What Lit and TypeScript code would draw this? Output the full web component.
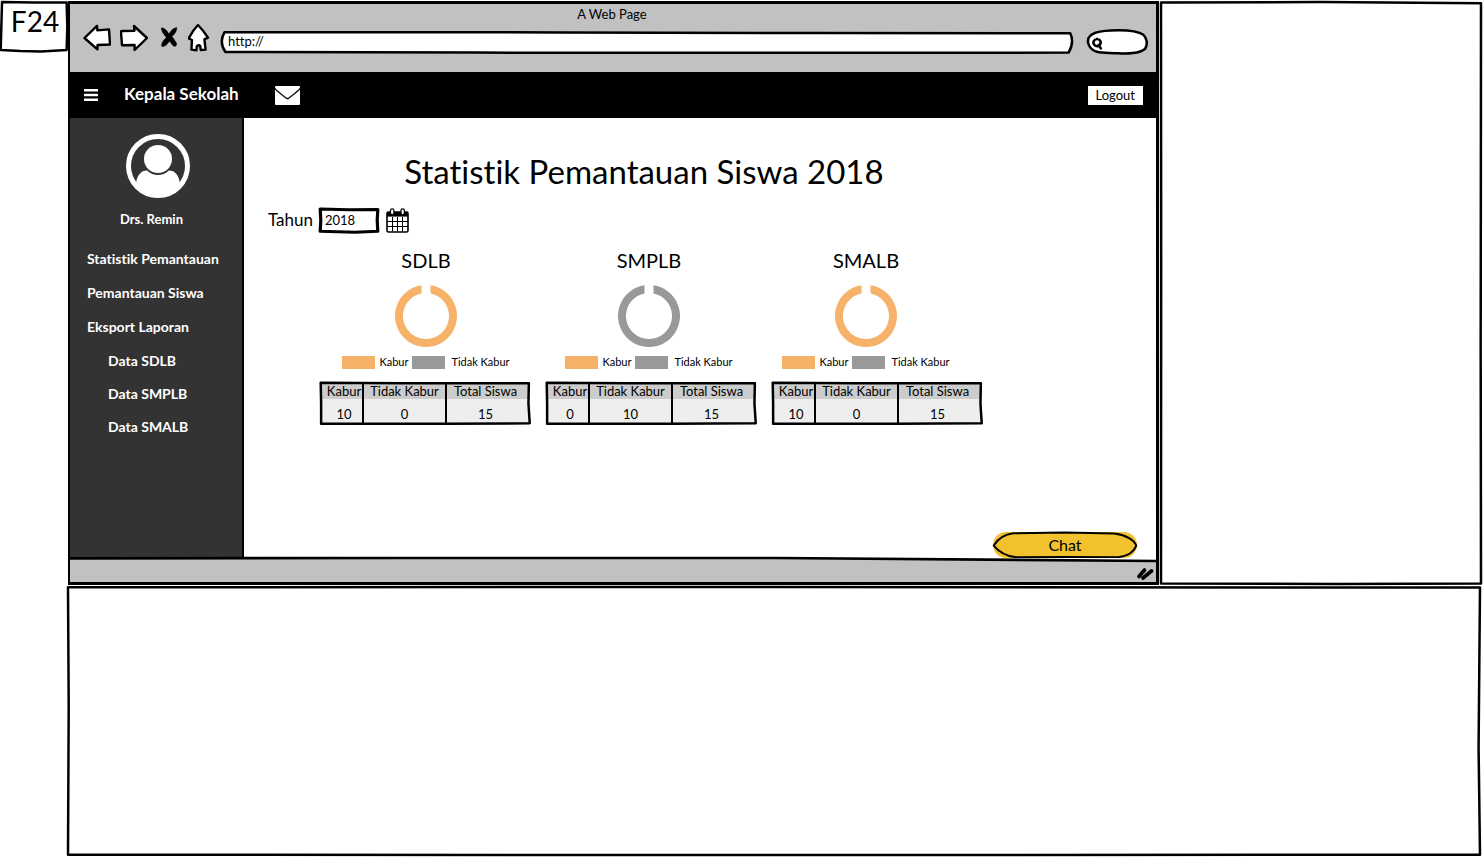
import { LitElement, html, css } from "lit";
import { customElement, property, state } from "lit/decorators.js";

interface School {
  name: string;
  ran: number;
  stayed: number;
  total: number;
}

const SCHOOLS: School[] = [
  { name: "SDLB", ran: 10, stayed: 0, total: 15 },
  { name: "SMPLB", ran: 0, stayed: 10, total: 15 },
  { name: "SMALB", ran: 10, stayed: 0, total: 15 },
];

const ORANGE = "#f7b26a";
const GREY = "#999999";

/* Hand-drawn outlines in a 100x100 box that stretches over its parent. */
const OUTLINES = {
  panel: "M0 0.1 L50 0 L100 0.2 L99.9 60 L100 99.9 L55 100 L0 99.9 L0.05 45 Z",
  tag: "M3 4 L50 5 L98 5 L99 50 L98 96 L60 99 L30 98 L1 96 L2 50 Z",
  address: "M0.3 5 L40 6 L70 9 L99.8 10 Q100.3 50 99.6 94 L60 95 L30 94 L0.4 91 Q-0.4 50 0.3 5 Z",
  search: "M3 62 C-4 20 14 4 40 2 C60 0 84 2 94 20 C101 36 101 60 97 78 C88 98 66 100 52 97 C32 92 10 104 3 62 Z",
  field: "M2 4 L50 7 L98 6 L97 50 L98 93 L60 97 L2 93 L3 50 Z",
  table: "M0.8 4 L40 5 L99 5 L98.8 50 L99.4 94 L60 95 L1 95 L1 50 Z",
  pill: "M0.5 52 C4 22 8 9 14 5 L50 2 L84 6 C92 10 98 30 99.5 52 C98 76 94 92 87 97 L50 96 L16 97 C8 92 4 76 0.5 52 Z",
};

const sketch = (shape: keyof typeof OUTLINES, kind = "") => html`
  <svg class="sketch ${kind}" viewBox="0 0 100 100" preserveAspectRatio="none" aria-hidden="true">
    <path d=${OUTLINES[shape]} vector-effect="non-scaling-stroke"></path>
  </svg>
`;

const base = css`
  * {
    box-sizing: border-box;
  }
  button,
  input {
    font: inherit;
    color: inherit;
    margin: 0;
    padding: 0;
    border: 0;
    background: none;
  }
  button {
    cursor: pointer;
  }
  .sketch {
    position: absolute;
    inset: 0;
    width: 100%;
    height: 100%;
    overflow: visible;
    fill: none;
    stroke: #000;
    stroke-width: 2.5;
    stroke-linejoin: round;
    pointer-events: none;
  }
  .sketch.white {
    fill: #fff;
  }
  .sketch.heavy {
    stroke-width: 3.2;
  }
  .sketch.light {
    stroke-width: 2;
  }
`;

@customElement("school-chart")
class SchoolChart extends LitElement {
  @property({ attribute: false }) school!: School;

  static styles = [
    base,
    css`
      :host {
        display: flex;
        flex-direction: column;
        align-items: center;
        width: 170px;
      }
      h2 {
        margin: 0 0 13px;
        font-size: 20px;
        line-height: 24px;
        font-weight: 400;
      }
      .ring {
        display: block;
        width: 62px;
        height: 62px;
      }
      .legend {
        display: flex;
        align-items: center;
        gap: 4px;
        margin-top: 8px;
        font-size: 11px;
        line-height: 14px;
        white-space: nowrap;
      }
      .swatch {
        width: 33px;
        height: 13px;
        background: #f7b26a;
      }
      .swatch.stayed {
        background: #999;
        margin-right: 2px;
      }
    `,
  ];

  render() {
    const { name, ran, stayed } = this.school;
    return html`
      <h2>${name}</h2>
      <svg class="ring" viewBox="0 0 62 62" role="img" aria-label=${name}>
        <path
          fill=${ran >= stayed ? ORANGE : GREY}
          d="M26.5 0.3 A31 31 0 1 0 35.5 0.3 V8.4 A23 23 0 1 1 26.5 8.4 Z"
        ></path>
      </svg>
      <div class="legend">
        <span class="swatch"></span><span>Kabur</span>
        <span class="swatch stayed"></span><span>Tidak Kabur</span>
      </div>
    `;
  }
}

@customElement("school-table")
class SchoolTable extends LitElement {
  @property({ attribute: false }) school!: School;

  static styles = [
    base,
    css`
      :host {
        display: block;
        position: relative;
        width: 212px;
        padding: 3px;
      }
      table {
        width: 100%;
        border-collapse: collapse;
        table-layout: fixed;
        font-size: 13px;
        text-align: center;
        white-space: nowrap;
        background: #eee;
      }
      .first {
        width: 41px;
      }
      .middle {
        width: 83px;
      }
      th,
      td {
        padding: 0;
        border-left: 2px solid #000;
      }
      th {
        height: 15px;
        line-height: 15px;
        font-weight: 400;
        background: #ccc;
      }
      td {
        height: 24px;
        line-height: 18px;
        padding-top: 6px;
      }
      th:first-child,
      td:first-child {
        padding-left: 4px;
        border-left: 0;
      }
      th:last-child,
      td:last-child {
        padding-right: 4px;
      }
    `,
  ];

  render() {
    const { name, ran, stayed, total } = this.school;
    return html`
      <table aria-label=${name}>
        <colgroup>
          <col class="first" />
          <col class="middle" />
          <col />
        </colgroup>
        <thead>
          <tr>
            <th scope="col">Kabur</th>
            <th scope="col">Tidak Kabur</th>
            <th scope="col">Total Siswa</th>
          </tr>
        </thead>
        <tbody>
          <tr>
            <td>${ran}</td>
            <td>${stayed}</td>
            <td>${total}</td>
          </tr>
        </tbody>
      </table>
      ${sketch("table")}
    `;
  }
}

@customElement("browser-chrome")
class BrowserChrome extends LitElement {
  static styles = [
    base,
    css`
      :host {
        display: block;
        padding: 2px 9px 18px 13px;
        background: #c1c1c1;
      }
      .title {
        font-size: 13px;
        line-height: 16px;
        padding-right: 6px;
        text-align: center;
      }
      .bar {
        display: flex;
        align-items: flex-end;
        height: 32px;
        padding-top: 2px;
      }
      .nav {
        display: flex;
        align-self: flex-start;
        gap: 9px;
        margin-right: 12px;
      }
      .nav button,
      .nav svg {
        display: block;
        height: 28px;
      }
      .nav svg {
        fill: #fff;
        stroke: #000;
        stroke-width: 2.4;
        stroke-linejoin: round;
      }
      .address {
        position: relative;
        flex: 1;
        height: 23px;
        margin-right: 15px;
      }
      .address input {
        position: relative;
        display: block;
        width: 100%;
        height: 19px;
        padding-left: 6px;
        font-size: 13px;
      }
      .search {
        position: relative;
        display: flex;
        width: 60px;
        height: 24px;
      }
      .search svg.glass {
        position: relative;
        flex: none;
        width: 12px;
        height: 14px;
        margin: 6px 0 0 4px;
        fill: none;
        stroke: #000;
        stroke-width: 2.6;
        stroke-linecap: round;
      }
      .search input {
        position: relative;
        width: 36px;
        font-size: 13px;
      }
    `,
  ];

  render() {
    return html`
      <div class="title">A Web Page</div>
      <div class="bar">
        <div class="nav">
          <button aria-label="Back">
            <svg width="28" viewBox="0 0 28 28">
              <path d="M1.5 14 L14 1.8 L14.4 6.4 L26 5.4 L27 20.5 L14.6 21 L14.4 25.4 Z" />
            </svg>
          </button>
          <button aria-label="Forward">
            <svg width="28" viewBox="0 0 28 28">
              <path d="M1 8 Q0.6 7 2 7 L14.4 6.8 L14 2 L27 14 L14.6 26 L14.6 21 L2 21.2 Z" />
            </svg>
          </button>
          <button aria-label="Stop">
            <svg width="22" viewBox="0 0 22 28">
              <path
                d="M6 4 Q9 5 12 10 Q15 4 19.6 3.4 Q20.5 7 15 12.5 L19.4 19 Q20 23 16.4 22 L12.4 17 Q9 23 5 22.4 Q3.4 19 9.4 13.5 Q4 7 4.4 4 Z"
                fill="#000"
                stroke-width="0.6"
              />
            </svg>
          </button>
          <button aria-label="Home">
            <svg width="22" viewBox="0 0 22 28">
              <path
                d="M10 1 Q15 6 20 13.6 L16.4 15.4 L17.6 25.6 L12.8 26 L12.2 22 Q10.4 20.4 8.8 22.2 L8.4 26.4 L3.4 25.6 L4 16 L0.6 14.4 Q5 6 10 1 Z"
              />
            </svg>
          </button>
        </div>
        <div class="address">
          ${sketch("address", "white")}
          <input type="text" value="http://" aria-label="Address" />
        </div>
        <div class="search">
          ${sketch("search", "white")}
          <svg class="glass" viewBox="0 0 12 14" aria-hidden="true">
            <path d="M6 3 A3.6 3.6 0 1 0 6.1 3 M7.6 9 L9.8 12.4" />
          </svg>
          <input type="text" aria-label="Search" />
        </div>
      </div>
    `;
  }
}

@customElement("app-root")
class AppRoot extends LitElement {
  @state() private year = "2018";

  static styles = [
    base,
    css`
      :host {
        display: grid;
        grid-template-columns: 68px minmax(0, 1fr) 322px;
        grid-template-rows: 1fr 271px;
        min-height: 100vh;
        padding-right: 1px;
        box-sizing: border-box;
        background: #fff;
        color: #000;
        font-family: Lato, "Open Sans", sans-serif;
        font-size: 14px;
        font-variant-ligatures: none;
        overflow: hidden;
      }
      .tag {
        position: relative;
        height: 52px;
        padding-left: 2px;
        font-size: 28px;
        line-height: 42px;
        text-align: center;
      }
      .window {
        display: flex;
        flex-direction: column;
        margin: 1px 1px 1px 0;
        border: 3px solid #000;
        border-left-width: 2px;
      }
      .notes {
        position: relative;
        margin: 2px 1px;
      }
      .footnotes {
        position: relative;
        grid-column: 2 / 4;
        margin: 1px 2px 2px 0;
      }
      .topbar {
        display: flex;
        align-items: center;
        height: 46px;
        padding: 0 13px 0 14px;
        background: #000;
        color: #fff;
      }
      .topbar button,
      .topbar svg {
        display: block;
      }
      .role {
        margin: 0 36px 0 26px;
        font-size: 17px;
        line-height: 20px;
        padding-bottom: 2px;
        font-weight: 700;
      }
      .topbar .logout {
        height: 19px;
        margin-left: auto;
        padding: 0 8px;
        background: #fff;
        color: #000;
        font-size: 13px;
        line-height: 19px;
      }
      .body {
        display: flex;
        flex: 1;
      }
      .sidebar {
        width: 174px;
        padding-top: 16px;
        border-right: 2px solid #000;
        background: #333;
        color: #fff;
        font-weight: 700;
      }
      .avatar {
        display: block;
        width: 64px;
        margin-left: 56px;
      }
      .user {
        margin: 11px 20px 13px 0;
        padding-left: 11px;
        font-size: 13px;
        line-height: 20px;
        text-align: center;
      }
      .menu {
        margin: 0;
        padding: 0 0 0 17px;
        list-style: none;
      }
      .menu a {
        display: block;
        line-height: 34px;
        color: inherit;
        text-decoration: none;
        white-space: nowrap;
      }
      .menu .sub a {
        padding-left: 21px;
        line-height: 33px;
      }
      .content {
        display: flex;
        flex: 1;
        flex-direction: column;
        padding: 34px 19px 0 24px;
      }
      h1 {
        max-width: 752px;
        margin: 0 0 16px;
        font-size: 33px;
        line-height: 38px;
        padding-bottom: 2px;
        font-weight: 400;
        text-align: center;
      }
      .year {
        display: flex;
        align-items: center;
        height: 25px;
        margin-bottom: 15px;
      }
      .year label {
        width: 51px;
        font-size: 17px;
        line-height: 20px;
        padding-bottom: 2px;
      }
      .year .field {
        position: relative;
        width: 60px;
        height: 25px;
        margin-right: 7px;
      }
      .year input {
        position: relative;
        display: block;
        width: 60px;
        height: 23px;
        padding-left: 6px;
        font-size: 13px;
      }
      .year svg {
        display: block;
      }
      .charts {
        display: grid;
        grid-template-columns: 223px 217px 170px;
        margin: 0 0 12px 73px;
      }
      .tables {
        display: flex;
        gap: 14px;
        margin-left: 51px;
      }
      .chat {
        position: relative;
        width: 144px;
        height: 26px;
        margin-top: auto;
        padding-bottom: 2px;
        align-self: flex-end;
        border-radius: 13px;
        background: #f2c12e;
        font-size: 16px;
      }
      .status {
        position: relative;
        height: 24px;
        background: #c1c1c1;
      }
      .status .edge {
        position: absolute;
        inset: 0;
        width: 100%;
        height: 100%;
        overflow: visible;
      }
      .status .grip {
        position: absolute;
        right: 2px;
        bottom: 1px;
      }
    `,
  ];

  render() {
    return html`
      <div class="tag">${sketch("tag")}F24</div>
      <section class="window">
        <browser-chrome></browser-chrome>
        <header class="topbar">
          <button aria-label="Menu">
            <svg width="14" height="12" viewBox="0 0 14 12" fill="#fff">
              <path d="M0 0h14v2.4H0zM0 4.8h14v2.4H0zM0 9.6h14V12H0z" />
            </svg>
          </button>
          <span class="role">Kepala Sekolah</span>
          <button aria-label="Messages">
            <svg width="25" height="19" viewBox="0 0 25 19" fill="#fff">
              <path d="M1 0 H24 Q25 0 25 1.4 Q24 3.4 13.6 11.4 Q12.5 12.2 11.4 11.4 Q1 3.4 0 1.4 Q0 0 1 0 Z" />
              <path d="M0 3.6 Q2 6 11 12.8 Q12.5 13.8 14 12.8 Q23 6 25 3.6 V18 Q25 19 24 19 H1 Q0 19 0 18 Z" />
            </svg>
          </button>
          <button class="logout">Logout</button>
        </header>
        <div class="body">
          <nav class="sidebar">
            <svg class="avatar" viewBox="0 0 64 64" aria-hidden="true">
              <circle cx="32" cy="32" r="29.5" fill="none" stroke="#fff" stroke-width="5" />
              <path
                fill="#fff"
                d="M10 50 C11 41 15 36.5 21 36.5 Q26 41 32 41 Q38 41 43 36.5 C49 36.5 53 41 54 50 Q46 62 32 62 Q18 62 10 50 Z"
              />
              <circle cx="32" cy="25" r="14" fill="#fff" />
            </svg>
            <div class="user">Drs. Remin</div>
            <ul class="menu">
              <li><a href="#statistik">Statistik Pemantauan</a></li>
              <li><a href="#pemantauan">Pemantauan Siswa</a></li>
              <li><a href="#ekspor">Eksport Laporan</a></li>
              ${SCHOOLS.map(
                (s) => html`<li class="sub"><a href="#data-${s.name}">Data ${s.name}</a></li>`
              )}
            </ul>
          </nav>
          <main class="content">
            <h1>Statistik Pemantauan Siswa ${this.year}</h1>
            <div class="year">
              <label for="year">Tahun</label>
              <div class="field">
                ${sketch("field", "heavy")}
                <input id="year" type="text" .value=${this.year} />
              </div>
              <button aria-label="Pilih tahun">
                <svg width="23" height="25" viewBox="0 0 23 25">
                  <rect x="1" y="4" width="21" height="20" rx="1.5" fill="#fff" stroke="#000" stroke-width="1.6" />
                  <path d="M1 4 H22 V8.6 H1 Z" fill="#000" />
                  <path
                    d="M6.5 9V23.5M11.5 9V23.5M16.5 9V23.5M1 13.5H22M1 18.5H22"
                    fill="none"
                    stroke="#000"
                    stroke-width="1"
                  />
                  <rect x="4.5" y="0.8" width="3.4" height="6" rx="1.7" fill="#fff" stroke="#000" stroke-width="1.2" />
                  <rect x="15" y="0.8" width="3.4" height="6" rx="1.7" fill="#fff" stroke="#000" stroke-width="1.2" />
                </svg>
              </button>
            </div>
            <div class="charts">
              ${SCHOOLS.map((s) => html`<school-chart .school=${s}></school-chart>`)}
            </div>
            <div class="tables">
              ${SCHOOLS.map((s) => html`<school-table .school=${s}></school-table>`)}
            </div>
            <button class="chat">${sketch("pill", "light")}Chat</button>
          </main>
        </div>
        <footer class="status">
          <svg class="edge" viewBox="0 0 100 24" preserveAspectRatio="none" aria-hidden="true">
            <path d="M65 0 L100 0 L100 3 Z" fill="#fff" />
            <path
              d="M0 0.4 L30 0 L65 0 L100 3"
              fill="none"
              stroke="#000"
              stroke-width="2.6"
              vector-effect="non-scaling-stroke"
            />
          </svg>
          <svg class="grip" width="18" height="14" viewBox="0 0 18 14" aria-hidden="true">
            <path d="M3 9.5 L8.5 3 M7 11 L15.5 4" stroke="#000" stroke-width="3.6" stroke-linecap="round" />
          </svg>
        </footer>
      </section>
      <aside class="notes">${sketch("panel")}</aside>
      <section class="footnotes">${sketch("panel")}</section>
    `;
  }
}
